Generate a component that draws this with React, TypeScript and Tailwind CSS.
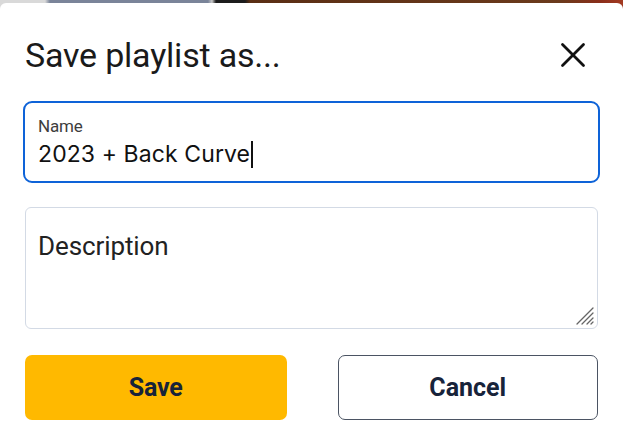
import { X } from "lucide-react";

const SavePlaylistDialog = () => {
  return (
    <div className="w-[623px] h-[441px] overflow-hidden bg-[linear-gradient(90deg,#d9d9d9_0px,#d9d9d9_45px,#7a8499_50px,#7a8499_208px,#c9c9c9_212px,#1c1c1c_216px,#1c1c1c_245px,#5a2e14_250px,#6b3a1c_560px,#8a2e1a_600px,#a33a22_623px)]">
      <div
        className="mt-[3px] h-[438px] bg-white rounded-t-[6px] px-[23px] pt-[28px]"
        style={{ fontFamily: "Roboto, 'Liberation Sans', sans-serif" }}
      >
        {/* Header */}
        <div className="flex items-center justify-between h-[48px] pl-[2px]">
          <h2 className="text-[34px] leading-none text-[#1a1a1a] tracking-[-0.2px] font-normal">
            Save playlist as...
          </h2>
          <button type="button" className="mr-[6px] text-[#111]">
            <X size={42} strokeWidth={1.6} />
          </button>
        </div>

        {/* Name */}
        <div className="mt-[22px] h-[82px] rounded-[9px] border-[2.5px] border-[#0e63d8] px-[13px] pt-[13px]">
          <div className="text-[17px] leading-[20px] text-[#3d3d3d] tracking-[-0.2px]">Name</div>
          <div
            className="mt-[4px] flex items-center text-[23px] leading-[28px] text-[#111]"
            style={{ fontFamily: "Inter, Roboto, sans-serif" }}
          >
            <span className="tracking-[0.1px]">2023 + Back Curve</span>
            <span className="ml-[1px] w-[1.5px] h-[27px] bg-[#111]" />
          </div>
        </div>

        {/* Description */}
        <div className="relative mx-[2px] mt-[24px] h-[122px] rounded-[6px] border border-[#d3dae5] px-[12px] pt-[24px]">
          <div className="text-[26px] leading-[28px] text-[#222] tracking-[-0.1px]">Description</div>
          <svg
            className="absolute right-[3px] bottom-[3px]"
            width="20"
            height="20"
            viewBox="0 0 20 20"
          >
            <g stroke="#666" strokeWidth="1.3" strokeLinecap="round">
              <line x1="19" y1="3" x2="3" y2="19" />
              <line x1="19" y1="8" x2="8" y2="19" />
              <line x1="19" y1="13" x2="13" y2="19" />
              <line x1="19" y1="17" x2="17" y2="19" />
            </g>
          </svg>
        </div>

        {/* Actions */}
        <div className="mx-[2px] mt-[26px] flex gap-[51px]">
          <button
            type="button"
            className="w-[262px] h-[65px] rounded-[7px] bg-[#ffb900] text-[25px] font-bold text-[#17233a] tracking-[-0.2px]"
          >
            Save
          </button>
          <button
            type="button"
            className="w-[261px] h-[65px] rounded-[7px] border-[1.5px] border-[#4b5463] bg-white text-[25px] font-bold text-[#17233a] tracking-[0px]"
          >
            Cancel
          </button>
        </div>
      </div>
    </div>
  );
};

export default function App() {
  return <SavePlaylistDialog />;
}
